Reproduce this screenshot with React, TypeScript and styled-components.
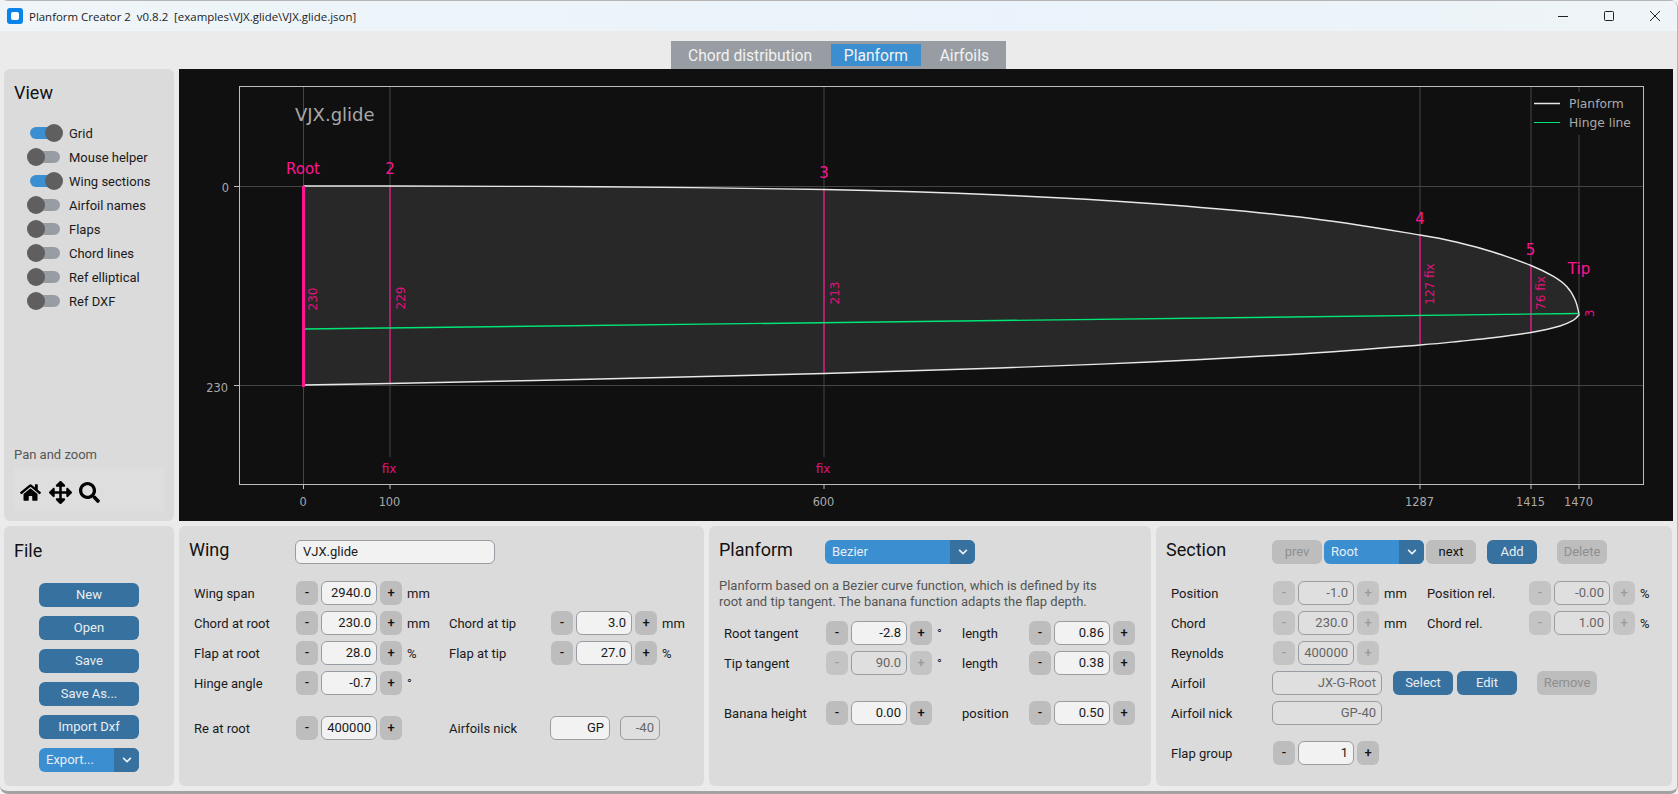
import React from 'react'
import styled, { createGlobalStyle } from 'styled-components'
import { FaHome, FaArrowsAlt, FaSearch, FaChevronDown } from 'react-icons/fa'

const GlobalStyle = createGlobalStyle`
  html, body {
    margin: 0;
    padding: 0;
    background: #f3f3f3;
  }
  * {
    box-sizing: border-box;
  }
`

const Window = styled.div`
  width: 1678px;
  height: 794px;
  overflow: hidden;
  display: flex;
  flex-direction: column;
  background: #ebebeb;
  color: #1a1a1a;
  font-family: Roboto, 'Liberation Sans', sans-serif;
  font-size: 13px;
  border-right: 1px solid #b5b5b5;
  border-bottom: 3px solid #a2a2a2;
  border-radius: 8px;
`
const TitleBar = styled.div`
  height: 31px;
  flex: none;
  display: flex;
  align-items: center;
  padding-left: 7px;
  background: linear-gradient(90deg, #eff5f8, #eaf3fb 60%, #eef4f7);
  border-top: 1px solid #b5b5b5;
`
const WindowTitle = styled.span`
  margin-left: 6px;
  font-family: 'Open Sans', 'Noto Sans', sans-serif;
  font-size: 11.45px;
  white-space: pre;
  color: #1c1c1c;
`
const WindowControls = styled.div`
  margin-left: auto;
  display: flex;
  margin-right: 14px;
  gap: 30px;
`
const TabRow = styled.div`
  height: 38px;
  flex: none;
  display: flex;
  justify-content: center;
  align-items: flex-end;
`
const TabBar = styled.div`
  width: 335px;
  height: 28px;
  display: flex;
  align-items: center;
  justify-content: space-between;
  padding: 0 3px;
  background: #979da2;
`
const Tab = styled.div<{ $active?: boolean }>`
  height: 22px;
  width: ${p => (p.$active ? '90px' : 'auto')};
  padding: 1px 14px 0;
  display: flex;
  align-items: center;
  justify-content: center;
  font-size: 15.6px;
  color: #f2f2f2;
  background: ${p => (p.$active ? '#3b8ed0' : 'transparent')};
`
const TopArea = styled.div`
  height: 452px;
  flex: none;
  display: grid;
  grid-template-columns: 170px 1494px;
  gap: 5px;
  margin-left: 4px;
`
const BottomArea = styled.div`
  height: 260px;
  flex: none;
  margin: 5px 0 0 4px;
  display: grid;
  grid-template-columns: 170px 525px 442px 516px;
  gap: 5px;
`
const Panel = styled.div`
  background: #dbdbdb;
  border-radius: 6px;
`
const ViewPanel = styled(Panel)`
  display: flex;
  flex-direction: column;
  padding: 12px 10px 10px;
`
const Heading = styled.div`
  font-size: 18px;
  line-height: 24px;
  color: #111;
`
const ViewTitle = styled(Heading)`
  height: 24px;
`
const ToggleList = styled.div`
  margin-top: 19px;
  display: flex;
  flex-direction: column;
  gap: 6px;
`
const ToggleRow = styled.div`
  height: 18px;
  display: flex;
  align-items: center;
  padding-left: 13px;
`
const Track = styled.div<{ $on?: boolean }>`
  position: relative;
  width: 30px;
  height: 12px;
  margin-left: 3px;
  border-radius: 6px;
  background: ${p => (p.$on ? '#3b8ed0' : '#979da2')};
`
const Knob = styled.div<{ $on?: boolean }>`
  position: absolute;
  top: -3px;
  left: ${p => (p.$on ? '15px' : '-3px')};
  width: 18px;
  height: 18px;
  border-radius: 50%;
  background: #5f5f5f;
`
const ToggleLabel = styled.span`
  margin-left: 9px;
`
const PanZoom = styled.div`
  margin-top: auto;
`
const PanZoomLabel = styled.div`
  color: #565656;
  line-height: 16px;
  transform: translateY(1px);
`
const PanZoomTools = styled.div`
  margin-top: 6px;
  height: 43px;
  width: 150px;
  display: flex;
  align-items: center;
  gap: 7.5px;
  padding: 6px 0 0 6px;
  background: #dedede;
  color: #000;
`
const PlotPanel = styled.div`
  background: #101010;
`
const PlotSvg = styled.svg`
  display: block;
  width: 1494px;
  height: 452px;
`
const FilePanel = styled(Panel)`
  padding: 13px 10px;
`
const FileButtons = styled.div`
  margin: 20px 0 0 25px;
  display: flex;
  flex-direction: column;
  gap: 9px;
`
const Button = styled.div<{ $disabled?: boolean; $width?: number; $tone?: 'blue' | 'gray' }>`
  width: ${p => p.$width ?? 60}px;
  height: 24px;
  flex: none;
  border-radius: 6px;
  display: flex;
  align-items: center;
  justify-content: center;
  padding-bottom: 1px;
  background: ${p => (p.$tone === 'gray' || p.$disabled ? '#bdbdbd' : '#36719f')};
  color: ${p => (p.$disabled ? '#8f8f8f' : p.$tone === 'gray' ? '#111' : '#e9eef2')};
`
const Combo = styled.div<{ $width: number }>`
  width: ${p => p.$width}px;
  height: 24px;
  flex: none;
  display: flex;
  border-radius: 6px;
  overflow: hidden;
  background: #3b8ed0;
  color: #e6eef5;
`
const ComboText = styled.div`
  flex: 1;
  padding-left: 7px;
  line-height: 24px;
`
const ComboArrow = styled.div`
  width: 25px;
  display: flex;
  align-items: center;
  justify-content: center;
  background: #36719f;
  color: #eef2f5;
`
const FormPanel = styled(Panel)`
  padding: 14px 10px 0;
`
const FormHeader = styled.div`
  display: flex;
  align-items: flex-start;
  height: 24px;
`
const FormTitle = styled(Heading)`
  width: 106px;
  flex: none;
  margin-top: -2px;
`
const NameEntry = styled.div`
  width: 200px;
  height: 24px;
  padding-left: 7px;
  line-height: 22px;
  border: 1px solid #979da2;
  border-radius: 6px;
  background: #f2f2f2;
`
const Fields = styled.div<{ $top: number }>`
  margin: ${p => p.$top}px 0 0 5px;
  display: flex;
  flex-direction: column;
  gap: 6px;
`
const FieldRow = styled.div<{ $cols: string }>`
  height: 24px;
  display: grid;
  grid-template-columns: ${p => p.$cols};
  align-items: center;
`
const Spacer = styled.div<{ $height: number }>`
  height: ${p => p.$height}px;
`
const Label = styled.span`
  color: #1a1a1a;
`
const Unit = styled.span`
  padding-left: 5px;
`
const SpinBox = styled.div`
  display: flex;
  gap: 3px;
`
const StepButton = styled.div<{ $disabled?: boolean }>`
  width: 22px;
  height: 24px;
  border-radius: 6px;
  display: flex;
  align-items: center;
  justify-content: center;
  padding-bottom: 2px;
  font-weight: 500;
  background: ${p => (p.$disabled ? '#c4c4c4' : '#bdbdbd')};
  color: ${p => (p.$disabled ? '#9a9a9a' : '#111')};
`
const Entry = styled.div<{ $disabled?: boolean; $width?: number }>`
  width: ${p => p.$width ?? 56}px;
  height: 24px;
  flex: none;
  padding-right: 5px;
  line-height: 21px;
  text-align: right;
  border: 1px solid #979da2;
  border-radius: 6px;
  background: ${p => (p.$disabled ? '#dfdfdf' : '#f2f2f2')};
  color: ${p => (p.$disabled ? '#666' : '#1a1a1a')};
`
const NickGroup = styled.div`
  display: flex;
  gap: 10px;
  margin-left: -1px;
`
const Description = styled.div`
  margin-top: 14px;
  line-height: 16px;
  color: #555;
  white-space: pre;
`
const SectionTools = styled.div`
  display: flex;
  gap: 2px;
`
const ToolGap = styled.div<{ $width: number }>`
  width: ${p => p.$width}px;
`
const AirfoilButtons = styled.div`
  display: flex;
  gap: 4px;
`

const PINK = '#ff1493'
const GREEN = '#00e676'
const Y0 = 186
const Y230 = 385
const sections = [
  { x: 303.5, top: 186, bottom: 385 },
  { x: 390, top: 186, bottom: 383.5 },
  { x: 824, top: 189.5, bottom: 373.5 },
  { x: 1420, top: 235, bottom: 345 },
  { x: 1531, top: 266, bottom: 332.5 },
]
const tipX = 1579

const leading: [number, number][] = [
  [303.5, 186], [390, 186], [600, 186.8], [824, 189.5], [1000, 195], [1150, 203.5], [1300, 217],
  [1420, 235], [1460, 243], [1493, 252], [1531, 265.5], [1553, 276.2], [1566.7, 286.5], [1575, 299.5], [1579, 313.5],
]
const trailing: [number, number][] = [
  [1579, 313.5], [1578.5, 315.5], [1573, 320.5], [1560, 326], [1531, 332.5], [1493, 337.8], [1460, 341.2],
  [1420, 345], [1300, 354], [1150, 362], [1000, 368], [824, 373.5], [600, 379], [390, 383.5], [303.5, 385],
]

// catmull-rom through the sampled outline points
function smoothPath(points: [number, number][]) {
  let d = `M${points[0][0]} ${points[0][1]}`
  for (let i = 0; i < points.length - 1; i++) {
    const p0 = points[Math.max(i - 1, 0)]
    const p1 = points[i]
    const p2 = points[i + 1]
    const p3 = points[Math.min(i + 2, points.length - 1)]
    const c1x = p1[0] + (p2[0] - p0[0]) / 6
    const c1y = p1[1] + (p2[1] - p0[1]) / 6
    const c2x = p2[0] - (p3[0] - p1[0]) / 6
    const c2y = p2[1] - (p3[1] - p1[1]) / 6
    d += ` C${c1x} ${c1y} ${c2x} ${c2y} ${p2[0]} ${p2[1]}`
  }
  return d
}

function Plot() {
  const outline = smoothPath(leading) + ' ' + smoothPath(trailing).replace(/^M[^C]*/, '')
  const gridX: { x: number; label: string; end: number }[] = [
    { x: 303.5, label: '0', end: 484 },
    { x: 390, label: '100', end: 457 },
    { x: 824, label: '600', end: 457 },
    { x: 1420, label: '1287', end: 484 },
    { x: 1531, label: '1415', end: 484 },
    { x: tipX, label: '1470', end: 484 },
  ]
  const sectionLabels: [number, number, string][] = [
    [303, 169, 'Root'], [390, 169, '2'], [824, 173, '3'], [1420, 218.5, '4'], [1530.5, 250, '5'], [1579, 269, 'Tip'],
  ]
  const chordLabels: [number, number, string][] = [
    [313, 299, '230'], [401, 298, '229'], [835, 293, '213'], [1429.5, 284, '127 fix'], [1541, 293, '76 fix'], [1589.5, 313.5, '3'],
  ]
  return (
    <PlotSvg viewBox="179 69 1494 452" fontFamily="'DejaVu Sans', sans-serif">
      <path d={outline + ' Z'} fill="#282828" />
      <g stroke="#454545" strokeWidth="1">
        <line x1="239" x2="1643" y1={Y0 + 0.5} y2={Y0 + 0.5} />
        <line x1="239" x2="1643" y1={Y230 + 0.5} y2={Y230 + 0.5} />
        {gridX.map(g => (
          <line key={g.x} x1={g.x} x2={g.x} y1="86" y2={g.end} />
        ))}
      </g>
      <rect x="1534" y="92" width="106" height="43" fill="#101010" />
      <rect x="239.5" y="86.5" width="1404" height="398" fill="none" stroke="#bdbdbd" strokeWidth="1" />
      <g stroke="#bdbdbd" strokeWidth="1">
        <line x1="234" x2="239" y1={Y0 + 0.5} y2={Y0 + 0.5} />
        <line x1="234" x2="239" y1={Y230 + 0.5} y2={Y230 + 0.5} />
        {gridX.map(g => (
          <line key={g.x} x1={g.x} x2={g.x} y1="484" y2="489" />
        ))}
      </g>
      <g fill="#aaaaaa" fontSize="11.4">
        <text x="229" y="192" textAnchor="end">0</text>
        <text x="228" y="392" textAnchor="end">230</text>
        {gridX.map(g => (
          <text key={g.x} x={g.x - 0.5} y="506" textAnchor="middle">{g.label}</text>
        ))}
      </g>
      <text x="295" y="121" fill="#a8a8a8" fontSize="18">VJX.glide</text>

      {sections.slice(1).map(s => (
        <line key={s.x} x1={s.x} x2={s.x} y1={s.top} y2={s.bottom} stroke={PINK} strokeWidth="1.2" />
      ))}
      <line x1="303.5" x2={tipX} y1="329" y2="313.5" stroke={GREEN} strokeWidth="1.4" />
      <path d={smoothPath(leading)} fill="none" stroke="#e8e8e8" strokeWidth="1.4" />
      <path d={smoothPath(trailing)} fill="none" stroke="#e8e8e8" strokeWidth="1.4" />
      <line x1="303.5" x2="303.5" y1="186" y2="387" stroke={PINK} strokeWidth="3" />

      <g fill={PINK} fontSize="15" textAnchor="middle">
        {sectionLabels.map(([x, y, text]) => (
          <text key={text} x={x} y={y + 5}>{text}</text>
        ))}
      </g>
      <g fill="#e0127f" fontSize="12" textAnchor="middle">
        {chordLabels.map(([x, y, text]) => (
          <text key={text} transform={`translate(${x} ${y}) rotate(-90)`} y="4">{text}</text>
        ))}
        <text x="389" y="473">fix</text>
        <text x="823" y="473">fix</text>
      </g>

      <line x1="1534" x2="1560" y1="103.5" y2="103.5" stroke="#e8e8e8" strokeWidth="1.4" />
      <line x1="1534" x2="1560" y1="122.5" y2="122.5" stroke={GREEN} strokeWidth="1.2" />
      <g fill="#aaaaaa" fontSize="12.3">
        <text x="1569" y="108">Planform</text>
        <text x="1569" y="127">Hinge line</text>
      </g>
    </PlotSvg>
  )
}

function AppIcon() {
  return (
    <svg width="16" height="16" viewBox="0 0 16 16">
      <rect width="16" height="16" rx="3" fill="#0a84e8" />
      <rect x="4" y="4" width="8" height="8" rx="2" fill="#fff" />
    </svg>
  )
}

function WindowButtons() {
  return (
    <WindowControls>
      <svg width="16" height="12" viewBox="0 0 16 12" stroke="#222" fill="none">
        <line x1="3" x2="13" y1="6.5" y2="6.5" />
      </svg>
      <svg width="16" height="12" viewBox="0 0 16 12" stroke="#222" fill="none">
        <rect x="3.5" y="1.5" width="9" height="9" rx="1" />
      </svg>
      <svg width="16" height="12" viewBox="0 0 16 12" stroke="#222" fill="none">
        <path d="M3 1 L13 11 M13 1 L3 11" />
      </svg>
    </WindowControls>
  )
}

function Spin(props: { value: string; disabled?: boolean }) {
  return (
    <SpinBox>
      <StepButton $disabled={props.disabled}>-</StepButton>
      <Entry $disabled={props.disabled}>{props.value}</Entry>
      <StepButton $disabled={props.disabled}>+</StepButton>
    </SpinBox>
  )
}

function ComboBox(props: { text: string; width: number }) {
  return (
    <Combo $width={props.width}>
      <ComboText>{props.text}</ComboText>
      <ComboArrow>
        <FaChevronDown size={10} />
      </ComboArrow>
    </Combo>
  )
}

const toggles = [
  { label: 'Grid', on: true },
  { label: 'Mouse helper' },
  { label: 'Wing sections', on: true },
  { label: 'Airfoil names' },
  { label: 'Flaps' },
  { label: 'Chord lines' },
  { label: 'Ref elliptical' },
  { label: 'Ref DXF' },
]

function View() {
  return (
    <ViewPanel>
      <ViewTitle>View</ViewTitle>
      <ToggleList>
        {toggles.map(t => (
          <ToggleRow key={t.label}>
            <Track $on={t.on}>
              <Knob $on={t.on} />
            </Track>
            <ToggleLabel>{t.label}</ToggleLabel>
          </ToggleRow>
        ))}
      </ToggleList>
      <PanZoom>
        <PanZoomLabel>Pan and zoom</PanZoomLabel>
        <PanZoomTools>
          <FaHome size={21} />
          <FaArrowsAlt size={23} />
          <FaSearch size={21} />
        </PanZoomTools>
      </PanZoom>
    </ViewPanel>
  )
}

function File() {
  return (
    <FilePanel>
      <Heading>File</Heading>
      <FileButtons>
        {['New', 'Open', 'Save', 'Save As...', 'Import Dxf'].map(b => (
          <Button key={b} $width={100}>{b}</Button>
        ))}
        <ComboBox text="Export..." width={100} />
      </FileButtons>
    </FilePanel>
  )
}

const wingCols = '102px 106px 47px 102px 106px auto'

function Wing() {
  return (
    <FormPanel>
      <FormHeader>
        <FormTitle>Wing</FormTitle>
        <NameEntry>VJX.glide</NameEntry>
      </FormHeader>
      <Fields $top={17}>
        <FieldRow $cols={wingCols}>
          <Label>Wing span</Label>
          <Spin value="2940.0" />
          <Unit>mm</Unit>
        </FieldRow>
        <FieldRow $cols={wingCols}>
          <Label>Chord at root</Label>
          <Spin value="230.0" />
          <Unit>mm</Unit>
          <Label>Chord at tip</Label>
          <Spin value="3.0" />
          <Unit>mm</Unit>
        </FieldRow>
        <FieldRow $cols={wingCols}>
          <Label>Flap at root</Label>
          <Spin value="28.0" />
          <Unit>%</Unit>
          <Label>Flap at tip</Label>
          <Spin value="27.0" />
          <Unit>%</Unit>
        </FieldRow>
        <FieldRow $cols={wingCols}>
          <Label>Hinge angle</Label>
          <Spin value="-0.7" />
          <Unit>°</Unit>
        </FieldRow>
        <Spacer $height={9} />
        <FieldRow $cols={wingCols}>
          <Label>Re at root</Label>
          <Spin value="400000" />
          <span />
          <Label>Airfoils nick</Label>
          <NickGroup>
            <Entry $width={60}>GP</Entry>
            <Entry $width={40} $disabled>-40</Entry>
          </NickGroup>
        </FieldRow>
      </Fields>
    </FormPanel>
  )
}

const planformCols = '102px 106px 30px 67px 106px'

function Planform() {
  return (
    <FormPanel>
      <FormHeader>
        <FormTitle>Planform</FormTitle>
        <ComboBox text="Bezier" width={150} />
      </FormHeader>
      <Description>
        {'Planform based on a Bezier curve function, which is defined by its\nroot and tip tangent. The banana function adapts the flap depth.'}
      </Description>
      <Fields $top={11}>
        <FieldRow $cols={planformCols}>
          <Label>Root tangent</Label>
          <Spin value="-2.8" />
          <Unit>°</Unit>
          <Label>length</Label>
          <Spin value="0.86" />
        </FieldRow>
        <FieldRow $cols={planformCols}>
          <Label>Tip tangent</Label>
          <Spin value="90.0" disabled />
          <Unit>°</Unit>
          <Label>length</Label>
          <Spin value="0.38" />
        </FieldRow>
        <Spacer $height={14} />
        <FieldRow $cols={planformCols}>
          <Label>Banana height</Label>
          <Spin value="0.00" />
          <span />
          <Label>position</Label>
          <Spin value="0.50" />
        </FieldRow>
      </Fields>
    </FormPanel>
  )
}

const sectionCols = '102px 106px 48px 102px 106px auto'
const airfoilCols = '101px 110px 11px 124px 20px 60px'

function Section() {
  return (
    <FormPanel>
      <FormHeader>
        <FormTitle>Section</FormTitle>
        <SectionTools>
          <Button $width={50} $disabled>prev</Button>
          <ComboBox text="Root" width={100} />
          <Button $width={50} $tone="gray">next</Button>
          <ToolGap $width={7} />
          <Button $width={50}>Add</Button>
          <ToolGap $width={16} />
          <Button $width={50} $disabled>Delete</Button>
        </SectionTools>
      </FormHeader>
      <Fields $top={17}>
        <FieldRow $cols={sectionCols}>
          <Label>Position</Label>
          <Spin value="-1.0" disabled />
          <Unit>mm</Unit>
          <Label>Position rel.</Label>
          <Spin value="-0.00" disabled />
          <Unit>%</Unit>
        </FieldRow>
        <FieldRow $cols={sectionCols}>
          <Label>Chord</Label>
          <Spin value="230.0" disabled />
          <Unit>mm</Unit>
          <Label>Chord rel.</Label>
          <Spin value="1.00" disabled />
          <Unit>%</Unit>
        </FieldRow>
        <FieldRow $cols={sectionCols}>
          <Label>Reynolds</Label>
          <Spin value="400000" disabled />
        </FieldRow>
        <FieldRow $cols={airfoilCols}>
          <Label>Airfoil</Label>
          <Entry $width={110} $disabled>JX-G-Root</Entry>
          <span />
          <AirfoilButtons>
            <Button>Select</Button>
            <Button>Edit</Button>
          </AirfoilButtons>
          <span />
          <Button $disabled>Remove</Button>
        </FieldRow>
        <FieldRow $cols={airfoilCols}>
          <Label>Airfoil nick</Label>
          <Entry $width={110} $disabled>GP-40</Entry>
        </FieldRow>
        <Spacer $height={4} />
        <FieldRow $cols={sectionCols}>
          <Label>Flap group</Label>
          <Spin value="1" />
        </FieldRow>
      </Fields>
    </FormPanel>
  )
}

export default function App() {
  return (
    <Window>
      <GlobalStyle />
      <TitleBar>
        <AppIcon />
        <WindowTitle>{'Planform Creator 2  v0.8.2  [examples\\VJX.glide\\VJX.glide.json]'}</WindowTitle>
        <WindowButtons />
      </TitleBar>
      <TabRow>
        <TabBar>
          <Tab>Chord distribution</Tab>
          <Tab $active>Planform</Tab>
          <Tab>Airfoils</Tab>
        </TabBar>
      </TabRow>
      <TopArea>
        <View />
        <PlotPanel>
          <Plot />
        </PlotPanel>
      </TopArea>
      <BottomArea>
        <File />
        <Wing />
        <Planform />
        <Section />
      </BottomArea>
    </Window>
  )
}
